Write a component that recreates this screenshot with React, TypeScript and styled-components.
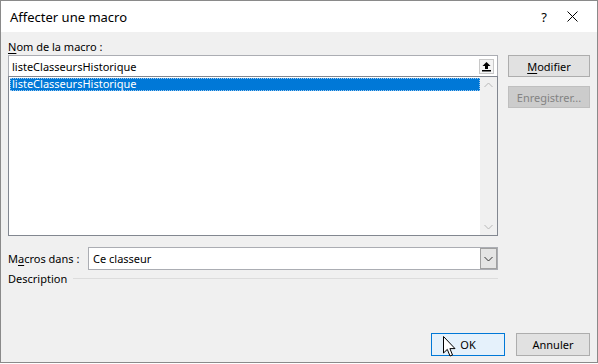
import React from "react";
import styled, { createGlobalStyle } from "styled-components";

const GlobalStyle = createGlobalStyle`
  html, body { margin: 0; padding: 0; background: #ffffff; }
  body { font-family: "Segoe UI", "Noto Sans", "Liberation Sans", sans-serif; font-size: 11px; color: #000; }
`;

const Window = styled.div`
  width: 598px;
  height: 363px;
  box-sizing: border-box;
  border: 1px solid #8a8a8a;
  display: flex;
  flex-direction: column;
  background: #f0f0f0;
  position: relative;
  overflow: hidden;
`;

const TitleBar = styled.div`
  height: 31px;
  background: #ffffff;
  display: flex;
  align-items: center;
  padding: 0 11px 0 9px;
`;

const Title = styled.div`
  flex: 1;
  font-size: 13px;
`;

const TitleBtn = styled.div`
  width: 28px;
  display: flex;
  justify-content: center;
  align-items: center;
  font-size: 13px;
`;

const Body = styled.div`
  flex: 1;
  display: grid;
  grid-template-columns: 490px 82px;
  column-gap: 10px;
  padding: 7px 0 0 7px;
`;

const Left = styled.div`
  display: flex;
  flex-direction: column;
`;

const Right = styled.div`
  display: flex;
  flex-direction: column;
  gap: 9px;
  padding-top: 16px;
`;

const Label = styled.div`
  height: 15px;
  line-height: 15px;
`;

const U = styled.span`
  text-decoration: underline;
  text-underline-offset: 2px;
`;

const TextBox = styled.div`
  margin-top: 1px;
  height: 21px;
  box-sizing: border-box;
  border: 1px solid #abadb3;
  border-bottom: none;
  background: #fff;
  display: flex;
  align-items: center;
  padding-left: 3px;
`;

const TextValue = styled.div`
  flex: 1;
`;

const UpBtn = styled.div`
  width: 13px;
  height: 13px;
  border: 1px solid #c8c8c8;
  background: #f4f4f4;
  margin-right: 3px;
  display: flex;
  align-items: center;
  justify-content: center;
`;

const ListBox = styled.div`
  height: 160px;
  box-sizing: border-box;
  border: 1px solid #828790;
  background: #fff;
  display: flex;
`;

const ListItems = styled.div`
  flex: 1;
  padding: 1px 0 0 1px;
`;

const ListItem = styled.div<{ selected?: boolean }>`
  height: 13px;
  line-height: 12px;
  padding-left: 2px;
  box-sizing: border-box;
  background: ${(p) => (p.selected ? "#0078d7" : "transparent")};
  color: ${(p) => (p.selected ? "#fff" : "#000")};
  outline: ${(p) => (p.selected ? "1px dotted #9ec8ee" : "none")};
  outline-offset: -1px;
`;

const ScrollBar = styled.div`
  width: 17px;
  background: #f0f0f0;
  display: flex;
  flex-direction: column;
  justify-content: space-between;
  align-items: center;
  padding: 5px 0;
`;

const Row = styled.div`
  display: flex;
  align-items: center;
  margin-top: 11px;
`;

const ComboLabel = styled.div`
  width: 80px;
`;

const Combo = styled.div`
  flex: 1;
  height: 23px;
  box-sizing: border-box;
  border: 1px solid #abadb3;
  background: #fff;
  display: flex;
  align-items: center;
  padding-left: 4px;
`;

const ComboValue = styled.div`
  flex: 1;
`;

const DropBtn = styled.div`
  width: 17px;
  height: 21px;
  box-sizing: border-box;
  border: 1px solid #a0a0a0;
  background: #e5e5e5;
  display: flex;
  align-items: center;
  justify-content: center;
`;

const Group = styled.div`
  display: flex;
  align-items: center;
  gap: 6px;
  margin-top: 1px;
  height: 15px;
`;

const GroupLine = styled.div`
  flex: 1;
  height: 1px;
  background: #dcdcdc;
`;

const Button = styled.div<{ primary?: boolean; disabled?: boolean }>`
  height: 22px;
  box-sizing: border-box;
  border: 1px solid ${(p) => (p.primary ? "#0078d7" : p.disabled ? "#bfbfbf" : "#adadad")};
  background: ${(p) => (p.primary ? "#e5f1fb" : p.disabled ? "#cccccc" : "#e1e1e1")};
  color: ${(p) => (p.disabled ? "#838383" : "#000")};
  display: flex;
  align-items: center;
  justify-content: center;
`;

const Footer = styled.div`
  display: flex;
  justify-content: flex-end;
  gap: 11px;
  padding: 0 7px 6px 0;
`;

const FooterButton = styled(Button)`
  width: 74px;
  height: 23px;
`;

const Cursor = styled.svg`
  position: absolute;
  left: 442px;
  top: 335px;
`;

const Chevron = ({ dir, color }: { dir: "up" | "down"; color: string }) => (
  <svg width="9" height="6" viewBox="0 0 9 6">
    <path
      d={dir === "up" ? "M0.5 5 L4.5 1 L8.5 5" : "M0.5 1 L4.5 5 L8.5 1"}
      fill="none"
      stroke={color}
      strokeWidth="1"
    />
  </svg>
);

export default function App() {
  return (
    <>
      <GlobalStyle />
      <Window>
        <TitleBar>
          <Title>Affecter une macro</Title>
          <TitleBtn>?</TitleBtn>
          <TitleBtn>
            <svg width="11" height="11" viewBox="0 0 11 11">
              <path d="M0.5 0.5 L10.5 10.5 M10.5 0.5 L0.5 10.5" stroke="#000" strokeWidth="1" />
            </svg>
          </TitleBtn>
        </TitleBar>
        <Body>
          <Left>
            <Label>
              <U>N</U>om de la macro :
            </Label>
            <TextBox>
              <TextValue>listeClasseursHistorique</TextValue>
              <UpBtn>
                <svg width="11" height="11" viewBox="0 0 11 11">
                  <path d="M5.5 1 L1.5 5 L4 5 L4 8 L7 8 L7 5 L9.5 5 Z" fill="#000" />
                  <rect x="1" y="9" width="9" height="1.5" fill="#000" />
                </svg>
              </UpBtn>
            </TextBox>
            <ListBox>
              <ListItems>
                <ListItem selected>listeClasseursHistorique</ListItem>
              </ListItems>
              <ScrollBar>
                <Chevron dir="up" color="#b8b8b8" />
                <Chevron dir="down" color="#b8b8b8" />
              </ScrollBar>
            </ListBox>
            <Row>
              <ComboLabel>
                M<U>a</U>cros dans :
              </ComboLabel>
              <Combo>
                <ComboValue>Ce classeur</ComboValue>
                <DropBtn>
                  <Chevron dir="down" color="#333" />
                </DropBtn>
              </Combo>
            </Row>
            <Group>
              Description
              <GroupLine />
            </Group>
          </Left>
          <Right>
            <Button>
              <span>
                <U>M</U>odifier
              </span>
            </Button>
            <Button disabled>Enregistrer...</Button>
          </Right>
        </Body>
        <Footer>
          <FooterButton primary>OK</FooterButton>
          <FooterButton>Annuler</FooterButton>
        </Footer>
        <Cursor width="14" height="23" viewBox="0 0 14 23">
          <path
            d="M0.5 0.5 L0.5 17 L4.3 13.4 L7 20 L9.5 19 L6.9 12.6 L12 12.6 Z"
            fill="#fff"
            stroke="#000"
            strokeWidth="1"
            strokeLinejoin="miter"
          />
        </Cursor>
      </Window>
    </>
  );
}
